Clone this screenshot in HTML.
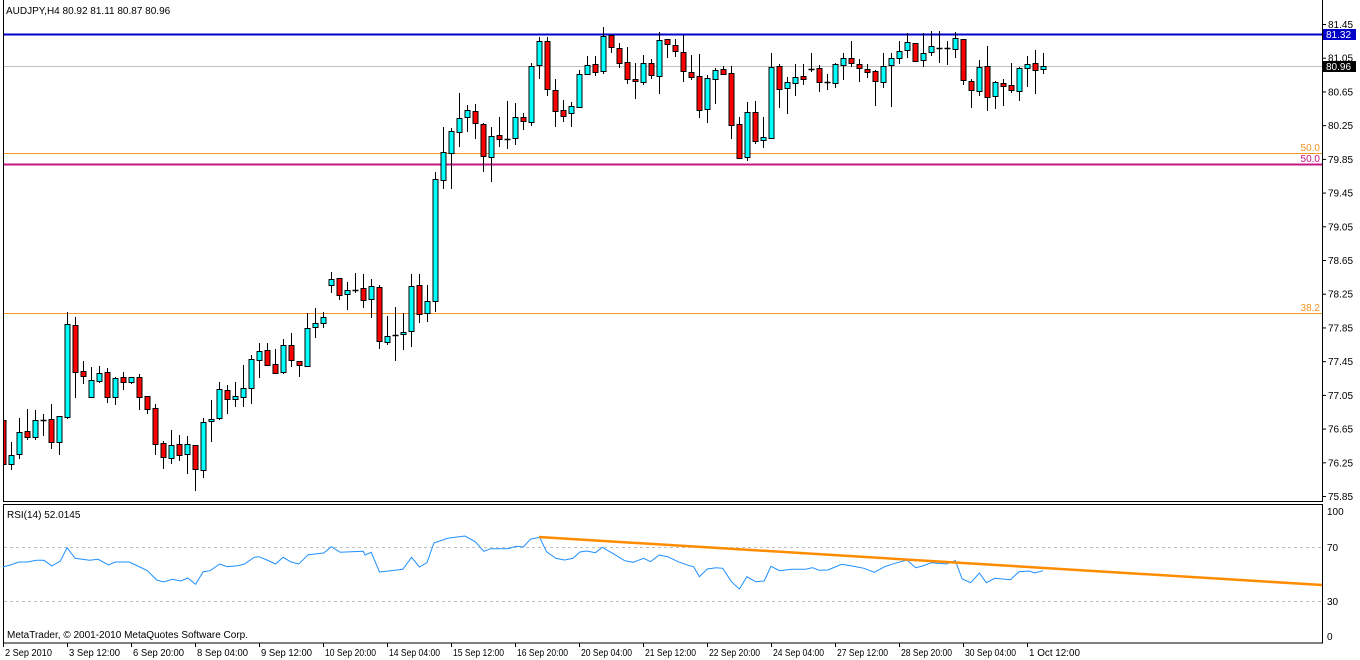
<!DOCTYPE html>
<html><head><meta charset="utf-8"><style>
html,body{margin:0;padding:0;background:#fff;width:1360px;height:660px;overflow:hidden}
svg{display:block;font-family:"Liberation Sans",Arial,sans-serif;font-size:10px}
</style></head><body>
<svg id="s" width="1360" height="660" xmlns="http://www.w3.org/2000/svg">
<defs><clipPath id="cp"><rect x="3.5" y="0" width="1318" height="501"/></clipPath></defs>
<rect width="1360" height="660" fill="#fff"/>
<text x="6" y="14" fill="#000">AUDJPY,H4  80.92 81.11 80.87 80.96</text>
<line x1="1322.5" y1="0" x2="1322.5" y2="502" stroke="#000"/>
<line x1="3" y1="501.5" x2="1323" y2="501.5" stroke="#000"/>
<rect x="3.5" y="504.5" width="1319" height="138.5" fill="none" stroke="#000"/>
<line x1="3" y1="66.5" x2="1322" y2="66.5" stroke="#c0c0c0"/>
<line x1="3" y1="153.5" x2="1322" y2="153.5" stroke="#f39423"/>
<line x1="3" y1="313.5" x2="1322" y2="313.5" stroke="#f39423"/>
<line x1="3" y1="164.5" x2="1322" y2="164.5" stroke="#c71585" stroke-width="2"/>
<line x1="3" y1="34.5" x2="1322" y2="34.5" stroke="#0000c8" stroke-width="2"/>
<g id="c" clip-path="url(#cp)"></g>
<line x1="3.5" y1="0" x2="3.5" y2="502" stroke="#000"/>
<g text-anchor="end">
<text x="1320" y="151" fill="#f39423">50.0</text>
<text x="1320" y="162" fill="#c71585">50.0</text>
<text x="1320" y="311" fill="#f39423">38.2</text>
</g>
<g id="ax" fill="#000"></g>
<rect x="1323" y="29" width="33" height="11" fill="#0000c8"/>
<text x="1326" y="38" fill="#fff">81.32</text>
<rect x="1323" y="61" width="33" height="11" fill="#000"/>
<text x="1326" y="70" fill="#fff">80.96</text>
<line x1="4" y1="547.5" x2="1322" y2="547.5" stroke="#c0c0c0" stroke-dasharray="3,3"/>
<line x1="4" y1="601.5" x2="1322" y2="601.5" stroke="#c0c0c0" stroke-dasharray="3,3"/>
<text x="7" y="518" fill="#000">RSI(14) 52.0145</text>
<text x="7" y="638" fill="#000">MetaTrader, © 2001-2010 MetaQuotes Software Corp.</text>
<polyline id="r" fill="none" stroke="#1e90ff" stroke-width="1"/>
<line x1="539" y1="537" x2="1322" y2="585" stroke="#ff8c00" stroke-width="2.5"/>
<g fill="#000">
<text x="1327" y="515">100</text><text x="1327" y="551">70</text><text x="1327" y="605">30</text><text x="1327" y="640">0</text>
</g>
<g id="tx" fill="#000"></g>
</svg>
<script>
var D=[[420,464,420,473,0],[455,464,442,470,1],[432,454,418,459,1],[431,437,409,440,0],[420,437,410,440,1],[420,420,414,436,2],[419,442,404,449,0],[416,442,416,455,1],[324,417,312,419,1],[325,372,317,398,0],
[371,376,361,384,0],[380,397,367,398,1],[373,381,366,383,1],[372,397,368,403,0],[378,397,377,405,1],[377,382,372,390,0],[377,382,377,384,1],[377,397,374,410,0],[396,409,396,414,0],[408,444,404,455,0],
[443,457,441,469,0],[445,458,430,464,1],[444,455,435,461,0],[444,454,436,474,1],[445,469,445,491,0],[422,470,418,478,1],[419,421,400,442,1],[389,418,382,420,1],[390,399,385,414,0],[396,399,382,407,1],
[388,397,365,407,1],[359,388,355,404,1],[351,360,343,378,1],[350,365,343,366,0],[364,373,349,373,0],[345,372,339,374,1],[345,360,333,367,0],[361,365,361,377,0],[328,366,313,366,1],[323,327,308,338,1],
[317,323,312,328,1],[279,285,272,293,1],[278,295,278,300,0],[290,294,282,310,1],[290,290,273,293,2],[288,300,274,308,0],[286,299,279,318,1],[287,341,285,349,0],[336,342,316,345,1],[335,335,307,361,2],
[332,334,313,350,1],[286,331,274,347,1],[285,314,274,323,0],[301,313,285,322,1],[179,301,172,312,1],[152,180,127,189,1],[131,153,128,189,1],[118,132,93,147,1],[110,117,105,132,1],[111,123,104,139,0],
[124,156,123,172,0],[136,157,127,182,1],[135,139,117,147,0],[139,139,101,149,2],[117,138,103,145,1],[117,121,113,130,0],[66,122,63,126,1],[41,65,37,79,1],[41,89,37,96,0],[90,111,79,127,0],
[110,116,100,122,0],[106,113,102,127,1],[74,107,70,108,1],[65,74,56,75,1],[64,72,56,76,0],[36,71,27,74,1],[35,47,35,53,0],[48,63,43,68,0],[62,79,47,84,0],[79,81,63,99,0],
[63,82,55,85,1],[63,75,59,79,0],[40,76,32,94,1],[39,44,39,58,0],[45,51,39,57,0],[52,71,35,82,0],[72,77,55,80,0],[76,110,54,118,0],[78,109,75,123,1],[70,79,68,104,1],
[69,74,66,75,0],[73,125,66,139,0],[124,158,117,159,0],[112,157,102,161,1],[112,141,101,144,0],[137,140,117,148,1],[67,138,53,139,1],[66,89,64,108,0],[82,88,77,114,1],[77,83,64,96,1],
[76,79,64,85,0],[69,69,53,72,2],[68,82,65,92,0],[82,82,74,90,2],[64,83,63,88,1],[58,65,53,80,1],[58,63,41,67,0],[64,68,59,82,0],[69,72,64,78,0],[71,81,70,106,0],
[66,82,53,88,1],[58,65,53,107,1],[51,58,41,64,1],[42,50,33,58,1],[43,61,43,61,0],[53,60,33,67,1],[46,52,31,56,1],[48,48,31,63,2],[48,48,41,65,2],[38,49,32,58,1],
[39,80,39,85,0],[81,90,79,108,0],[67,91,60,96,1],[66,97,46,111,0],[82,96,81,109,1],[83,86,79,106,0],[85,90,63,93,0],[68,91,67,101,1],[64,68,56,87,1],[63,70,50,94,0],[66,69,53,74,1]];
var g=document.getElementById('c'),h='';
D.forEach(function(d,i){var x=Math.round(3.3+8*i)+0.5;
h+='<line x1="'+x+'" y1="'+d[2]+'" x2="'+x+'" y2="'+d[3]+'" stroke="#000"/>';
if(d[4]==2||d[1]-d[0]<1){h+='<line x1="'+(x-3)+'" y1="'+(d[0]+0.5)+'" x2="'+(x+3)+'" y2="'+(d[0]+0.5)+'" stroke="#000" stroke-width="1.5"/>';}
else h+='<rect x="'+(x-2.5)+'" y="'+(d[0]+0.5)+'" width="5" height="'+(d[1]-d[0])+'" fill="'+(d[4]?'#00ffff':'#ff0000')+'" stroke="#000"/>';});
g.innerHTML=h;
var ax='',p=[81.45,81.05,80.65,80.25,79.85,79.45,79.05,78.65,78.25,77.85,77.45,77.05,76.65,76.25,75.85];
p.forEach(function(v){var y=24+(81.45-v)*84.29;ax+='<line x1="1322" y1="'+(y+0.5)+'" x2="1326" y2="'+(y+0.5)+'" stroke="#000"/><text x="1328" y="'+(y+4)+'">'+v.toFixed(2)+'</text>';});
document.getElementById('ax').innerHTML=ax;
var L=['2 Sep 2010','3 Sep 12:00','6 Sep 20:00','8 Sep 04:00','9 Sep 12:00','10 Sep 20:00','14 Sep 04:00','15 Sep 12:00','16 Sep 20:00','20 Sep 04:00','21 Sep 12:00','22 Sep 20:00','24 Sep 04:00','27 Sep 12:00','28 Sep 20:00','30 Sep 04:00','1 Oct 12:00'],t='';
L.forEach(function(s,i){var x=3+64*i;t+='<line x1="'+(x+0.5)+'" y1="643" x2="'+(x+0.5)+'" y2="647" stroke="#000"/><text x="'+(x+2)+'" y="656" textLength="'+(s.length>10?51:(s.length==10?47:45))+'" lengthAdjust="spacingAndGlyphs">'+s+'</text>';});
document.getElementById('tx').innerHTML=t;
var A=[[8,201],[30,195],[55,186],[80,186],[105,181],[128,181],[150,198],[175,183],[195,143],[218,175],[260,181],[285,178],[315,195],[335,186],[375,186],[400,198],[428,212],[455,240],[475,246],[500,238],[525,243],[545,234],[568,253],[590,215],[610,212],[638,192],[660,200],[690,197],[710,192],[738,172],[752,170],[775,180],[800,192],[822,172],[845,186],[868,192],[895,164],[940,159],[962,140],[988,157],[1055,154],[1060,165],[1078,157],[1102,216],[1170,208],[1195,172],[1218,201],[1240,188],[1260,129],[1300,115],[1350,108],[1380,125],[1405,154],[1425,146],[1475,146],[1500,139],[1520,141],[1540,118]];
var B=[[0,118],[28,112],[48,155],[75,175],[100,180],[125,175],[145,156],[165,153],[190,158],[210,142],[240,160],[275,182],[300,187],[330,175],[350,185],[375,165],[400,170],[430,185],[460,196],[475,200],[492,230],[515,207],[540,203],[560,205],[585,245],[608,267],[630,230],[655,245],[680,243],[700,199],[725,212],[760,208],[800,208],[820,203],[840,211],[865,210],[905,193],[935,198],[970,205],[1000,217],[1030,200],[1060,190],[1095,180],[1120,203],[1140,198],[1165,188],[1210,192],[1235,182],[1255,237],[1280,248],[1305,219],[1325,248],[1350,235],[1395,239],[1420,215],[1450,213],[1465,219],[1490,212]];
var pts=[];A.forEach(function(a){pts.push((a[0]/2.904).toFixed(1)+','+(500+a[1]/3).toFixed(1));});
B.forEach(function(a){pts.push((530+a[0]/2.904).toFixed(1)+','+(500+a[1]/3).toFixed(1));});
document.getElementById('r').setAttribute('points',pts.join(' '));
</script>
</body></html>
